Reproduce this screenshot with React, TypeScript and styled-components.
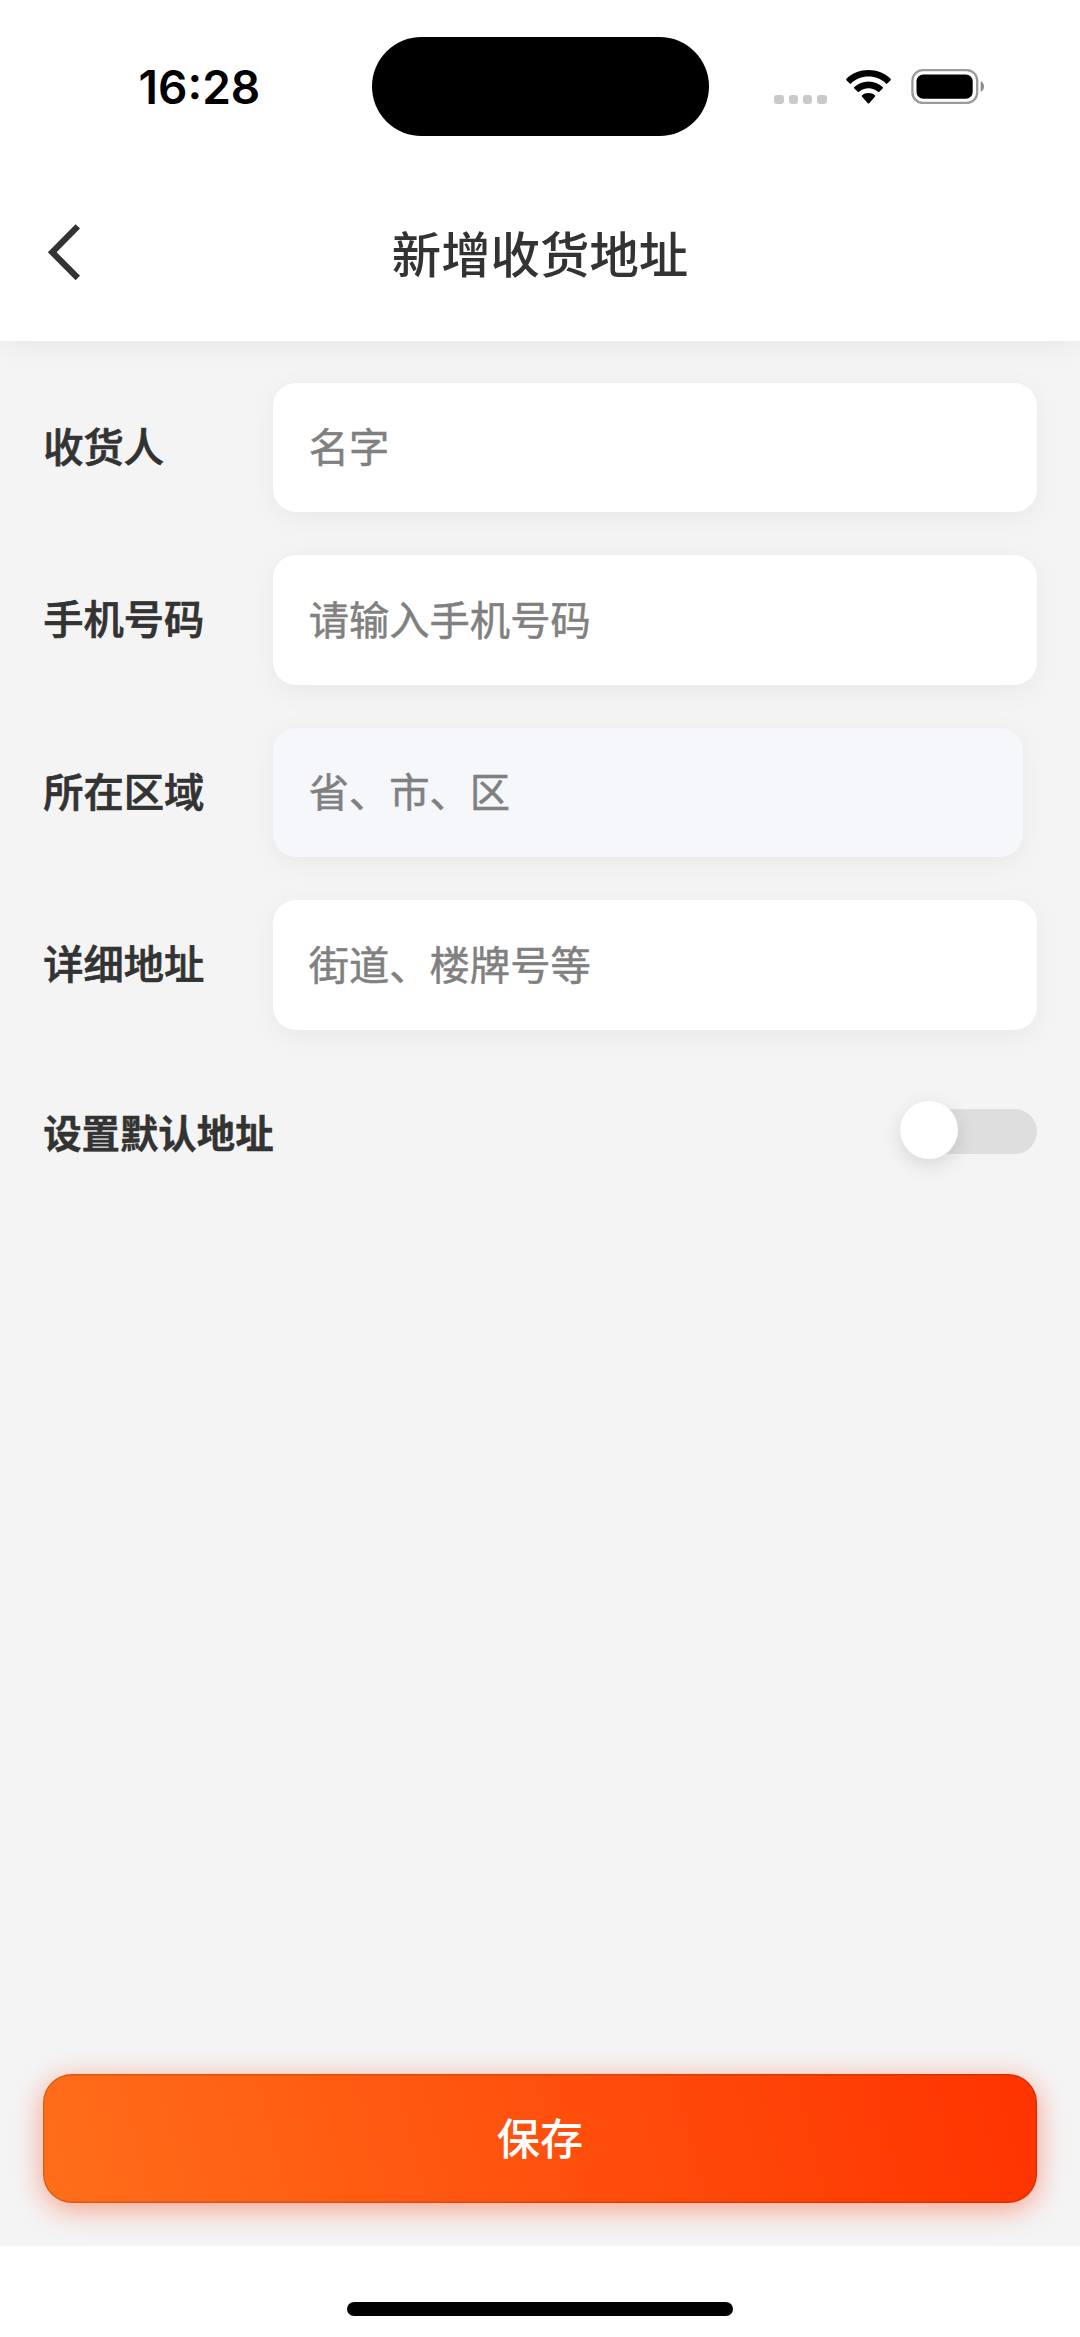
import React, { useState } from 'react';
import styled, { createGlobalStyle } from 'styled-components';

const GlobalStyle = createGlobalStyle`
  * { box-sizing: border-box; }
  html, body { margin: 0; padding: 0; background: #fff; }
  body, input, button {
    font-family: "Noto Sans CJK SC", "Noto Sans", sans-serif;
  }
`;

const Screen = styled.div`
  width: 1080px;
  height: 2337px;
  display: flex;
  flex-direction: column;
  background: #fff;
  overflow: hidden;
`;

const Top = styled.header`
  flex: none;
  height: 340.6px;
  background: #fff;
  box-shadow: 0 3px 29px rgba(0, 0, 0, 0.06);
  z-index: 1;
`;

const StatusBar = styled.div`
  height: 173px;
  padding-top: 37px;
  display: grid;
  grid-template-columns: 371.5px 337px 1fr;
  align-items: start;
`;

const Clock = styled.div`
  height: 98px;
  padding-left: 138.6px;
  line-height: 101px;
  font-family: Inter, "Liberation Sans", sans-serif;
  font-size: 46px;
  font-weight: 600;
  letter-spacing: 0px;
  color: #000;
`;

const Island = styled.div`
  height: 98.5px;
  border-radius: 50px;
  background: #000;
`;

const StatusIcons = styled.div`
  height: 67.3px;
  padding-left: 65.8px;
  display: flex;
  align-items: flex-end;
`;

const SignalDots = styled.div`
  display: flex;
  gap: 5px;
  margin-right: 19.4px;
`;

const Dot = styled.span`
  width: 9.4px;
  height: 9.4px;
  border-radius: 3px;
  background: #c9c9c9;
`;

const WifiSvg = styled.svg`
  width: 45px;
  height: 34px;
  margin-right: 19.5px;
`;

const BatterySvg = styled.svg`
  width: 75px;
  height: 35px;
`;

const NavBar = styled.div`
  height: 167px;
  padding: 0 47px;
  display: grid;
  grid-template-columns: 100px 1fr 100px;
  align-items: center;
`;

const BackButton = styled.button`
  width: 36px;
  height: 60px;
  margin-top: -9px;
  padding: 0;
  border: 0;
  background: none;
  display: block;
  svg { display: block; }
`;

const Title = styled.h1`
  margin: 0 0 9px;
  text-align: center;
  font-size: 49.4px;
  line-height: 72px;
  font-weight: 500;
  color: #333;
`;

const Main = styled.main`
  flex: none;
  height: 1905.2px;
  padding: 42.4px 43.2px;
  display: flex;
  flex-direction: column;
  background: #f4f4f4;
  overflow: hidden;
`;

const Form = styled.div`
  display: flex;
  flex-direction: column;
  gap: 43.2px;
`;

const Row = styled.label`
  height: 129.3px;
  display: grid;
  grid-template-columns: 230px 1fr;
  align-items: center;
`;

const Label = styled.span`
  margin-bottom: 6px;
  font-size: 40.3px;
  line-height: 58px;
  font-weight: 500;
  color: #333;
  -webkit-text-stroke: 0.7px #333;
`;

const Field = styled.input<{ $picker?: boolean }>`
  width: ${(p) => (p.$picker ? '749.6px' : '100%')};
  height: 129.3px;
  padding: 0 35.5px 6px;
  border: 0;
  outline: 0;
  border-radius: 23px;
  background: ${(p) => (p.$picker ? '#f5f7fb' : '#fff')};
  box-shadow: 0 6px 29px rgba(0, 0, 0, 0.05);
  font-size: 40.3px;
  color: #333;
  &::placeholder {
    color: #808080;
    opacity: 1;
    -webkit-text-stroke: 0.5px #808080;
  }
`;

const DefaultRow = styled.div`
  height: 60px;
  margin-top: 71px;
  display: flex;
  justify-content: space-between;
  align-items: center;
`;

const DefaultLabel = styled.span`
  font-size: 38.4px;
  line-height: 56px;
  font-weight: 700;
  color: #333;
  -webkit-text-stroke: 0.4px #333;
`;

const Track = styled.button`
  width: 136.8px;
  height: 45.4px;
  margin-top: 2px;
  padding: 0;
  border: 0;
  border-radius: 23px;
  background: #dedede;
  display: flex;
  align-items: center;
`;

const Knob = styled.span`
  flex: none;
  width: 57.8px;
  height: 58.4px;
  border-radius: 50%;
  background: #fff;
  margin-top: -3.5px;
  box-shadow: 0 6px 20px rgba(0, 0, 0, 0.12);
`;

const SaveButton = styled.button`
  flex: none;
  width: 100%;
  height: 129.4px;
  margin-top: auto;
  padding: 0 0 5px;
  border: 0;
  border-radius: 28.8px;
  background: linear-gradient(76deg, #ff6e1a 0%, #ff3300 100%);
  box-shadow: 0 6px 29px rgba(255, 51, 0, 0.44), inset 0 0 0 1.4px rgba(60, 30, 0, 0.2);
  color: #fff;
  font-size: 43.2px;
  line-height: 64px;
  font-weight: 500;
`;

const HomeArea = styled.footer`
  flex: 1;
  padding-top: 56.2px;
  display: flex;
  justify-content: center;
  background: #fff;
`;

const HomeIndicator = styled.div`
  width: 386.5px;
  height: 13.6px;
  border-radius: 7px;
  background: #000;
`;

const fields = [
  { label: '收货人', hint: '名字' },
  { label: '手机号码', hint: '请输入手机号码' },
  { label: '所在区域', hint: '省、市、区', picker: true },
  { label: '详细地址', hint: '街道、楼牌号等' },
];

function Wifi() {
  return (
    <WifiSvg viewBox="0 0 45 34">
      <path d="M22.5 0C31 0 38.8 3.300 44.600 8.800C45 9.200 45 9.800 44.600 10.200L41.300 13.500C40.900 13.900 40.300 13.900 39.900 13.500C35.300 9.200 29.200 6.600 22.500 6.600S9.700 9.200 5.100 13.500C4.700 13.900 4.100 13.900 3.700 13.500L0.400 10.200C0 9.800 0 9.200 0.400 8.800C6.200 3.300 14 0 22.500 0Z" />
      <path d="M22.500 11.500C28 11.500 32.900 13.600 36.700 17C37.100 17.400 37.100 18 36.700 18.400L33.300 21.800C32.900 22.200 32.300 22.200 31.900 21.800C29.400 19.500 26.100 18.200 22.500 18.200S15.600 19.500 13.100 21.800C12.700 22.200 12.100 22.200 11.700 21.800L8.300 18.400C7.900 18 7.900 17.400 8.300 17C12.100 13.600 17 11.500 22.500 11.500Z" />
      <path d="M22.500 23C25.100 23 27.300 23.900 28.900 25.300C29.300 25.700 29.300 26.300 28.900 26.700L23.200 33.300C22.800 33.700 22.200 33.700 21.800 33.300L16.100 26.700C15.700 26.300 15.700 25.700 16.100 25.300C17.700 23.900 19.900 23 22.500 23Z" />
    </WifiSvg>
  );
}

function Battery() {
  return (
    <BatterySvg viewBox="0 0 75 35">
      <rect x="1.400" y="1.200" width="64.800" height="32.800" rx="10.500" fill="none" stroke="#9b9b9b" strokeWidth="2.300" />
      <rect x="5.500" y="5.500" width="56.200" height="24.200" rx="6.800" fill="#000" />
      <path d="M69.700 12.200C71.800 13 73 15.100 73 17.600S71.800 22.200 69.700 23Z" fill="#8c8c8c" />
    </BatterySvg>
  );
}

export default function App() {
  const [isDefault, setIsDefault] = useState(false);
  return (
    <>
      <GlobalStyle />
      <Screen>
        <Top>
          <StatusBar>
            <Clock>16:28</Clock>
            <Island />
            <StatusIcons>
              <SignalDots>
                <Dot /><Dot /><Dot /><Dot />
              </SignalDots>
              <Wifi />
              <Battery />
            </StatusIcons>
          </StatusBar>
          <NavBar>
            <BackButton aria-label="返回">
              <svg width="36" height="60" viewBox="0 0 36 60">
                <path d="M30.800 4.400L5.200 30.200L30.800 56" fill="none" stroke="#333" strokeWidth="6.200" />
              </svg>
            </BackButton>
            <Title>新增收货地址</Title>
          </NavBar>
        </Top>
        <Main>
          <Form>
            {fields.map((f) => (
              <Row key={f.label}>
                <Label>{f.label}</Label>
                <Field placeholder={f.hint} $picker={f.picker} readOnly={f.picker} />
              </Row>
            ))}
          </Form>
          <DefaultRow>
            <DefaultLabel>设置默认地址</DefaultLabel>
            <Track role="switch" aria-checked={isDefault} onClick={() => setIsDefault(!isDefault)}
              style={{ justifyContent: isDefault ? 'flex-end' : 'flex-start' }}>
              <Knob />
            </Track>
          </DefaultRow>
          <SaveButton>保存</SaveButton>
        </Main>
        <HomeArea>
          <HomeIndicator />
        </HomeArea>
      </Screen>
    </>
  );
}
